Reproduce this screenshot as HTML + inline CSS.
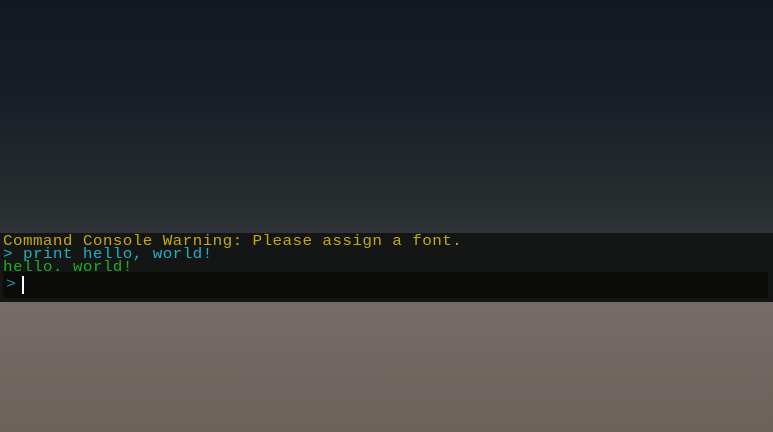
<!DOCTYPE html>
<html><head><style>
html,body{margin:0;padding:0;width:773px;height:432px;overflow:hidden}
body{position:relative;background:linear-gradient(#141820 0px,#171c24 80px,#20272d 160px,#2a302f 215px,#30343a 232px)}
#ground{position:absolute;left:0;top:302px;width:773px;height:130px;background:linear-gradient(#756c67,#6c625c)}
#con{position:absolute;left:0;top:233px;width:773px;height:69px;background:rgba(18,18,18,0.92)}
.l{position:absolute;left:3px;font-family:"Liberation Mono",monospace;font-size:16px;letter-spacing:0.38px;line-height:14px;white-space:pre;transform:scaleY(0.9);transform-origin:0 0}
#inp{position:absolute;left:3px;top:272px;width:765px;height:26px;background:#0b0b0a}
#cur{position:absolute;left:22px;top:276px;width:2px;height:18px;background:#fff}
</style></head><body>
<div id="ground"></div>
<div id="con"></div>
<div class="l" style="top:235px;color:#c2a911">Command Console Warning: Please assign a font.</div>
<div class="l" style="top:248px;color:#1fb0c0">&gt; print hello, world!</div>
<div class="l" style="top:261px;color:#1fae1f">hello. world!</div>
<div id="inp"></div>
<div class="l" style="top:278px;left:6px;color:#1a9aa8">&gt;</div>
<div id="cur"></div>
</body></html>
